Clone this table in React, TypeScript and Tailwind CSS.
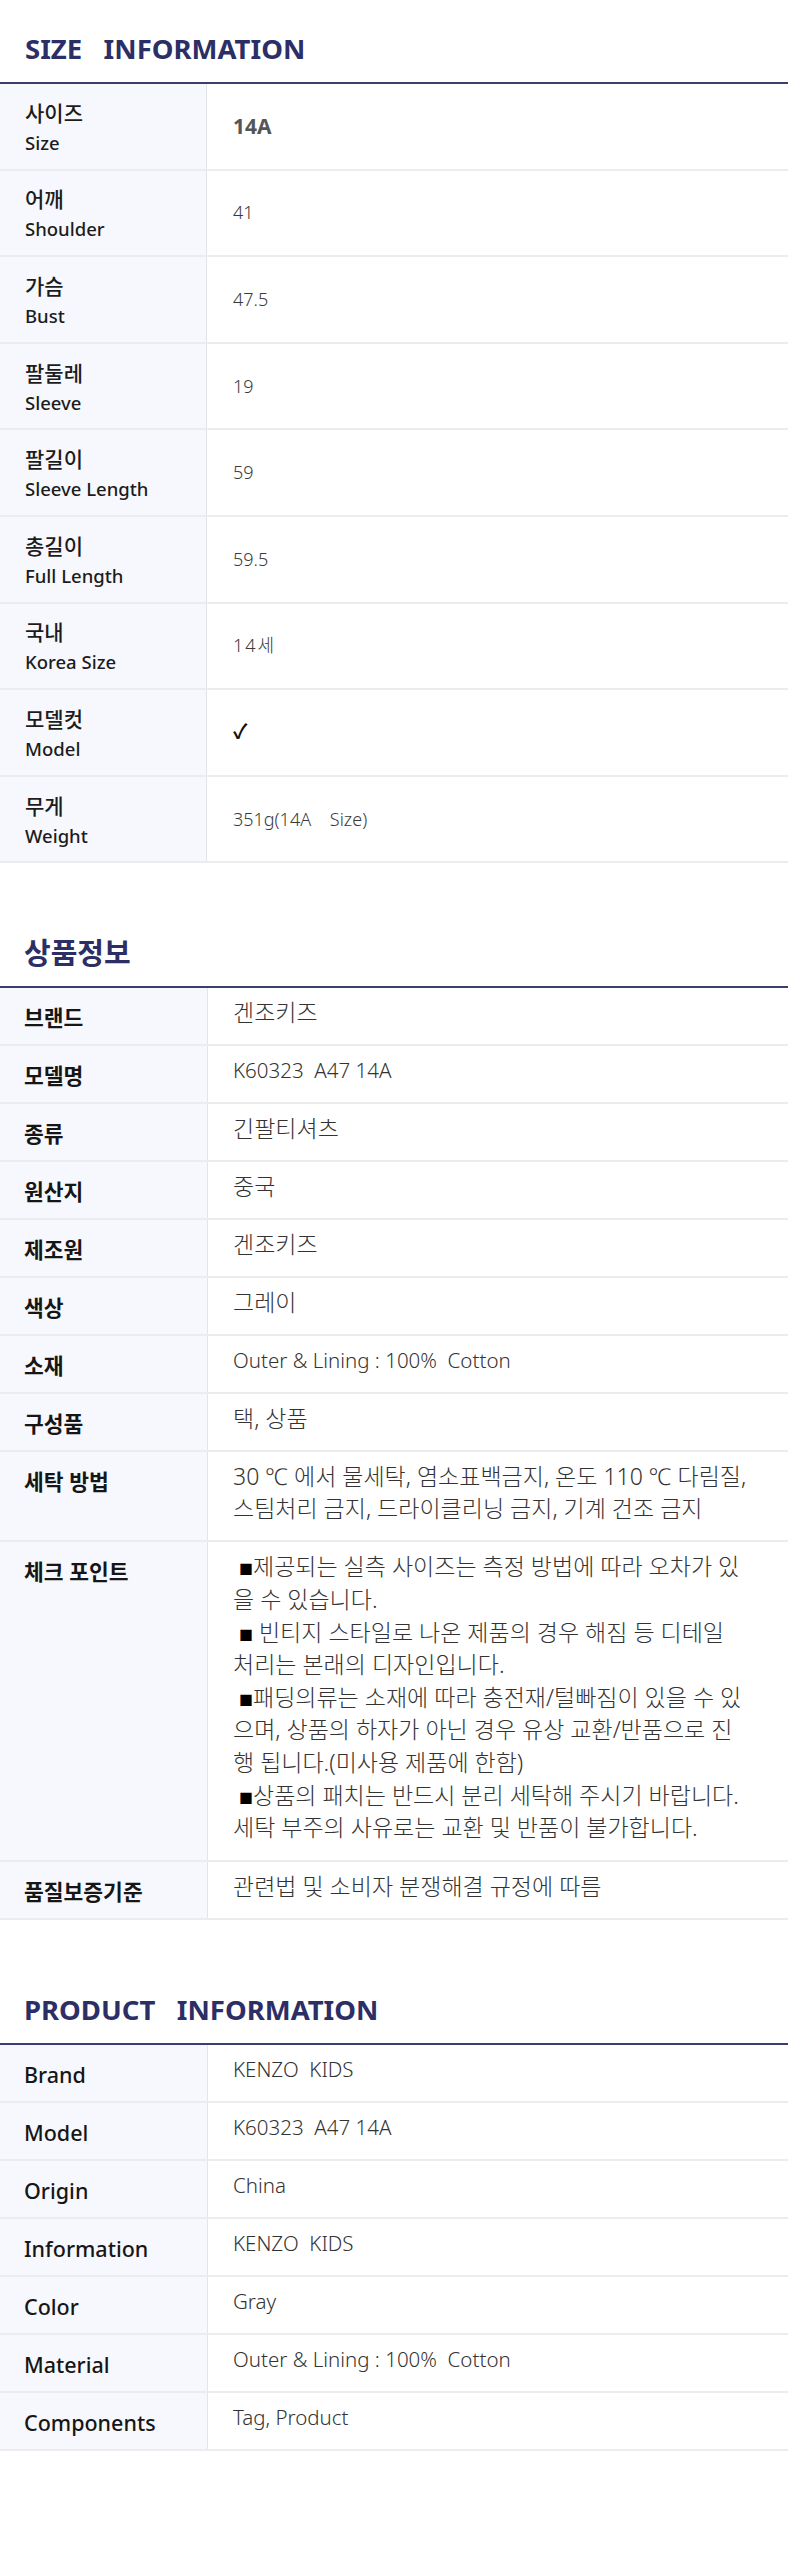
import React from "react";

const sizeRows: [string, string, string][] = [
  ["사이즈", "Size", "14A"],
  ["어깨", "Shoulder", "41"],
  ["가슴", "Bust", "47.5"],
  ["팔둘레", "Sleeve", "19"],
  ["팔길이", "Sleeve Length", "59"],
  ["총길이", "Full Length", "59.5"],
  ["국내", "Korea Size", "14세"],
  ["모델컷", "Model", "✓"],
  ["무게", "Weight", "351g(14A    Size)"],
];

type InfoRow = { label: string; lines: string[]; tight?: boolean; latin?: boolean };

const infoRows: InfoRow[] = [
  { label: "브랜드", lines: ["겐조키즈"] },
  { label: "모델명", lines: ["K60323  A47 14A"], latin: true },
  { label: "종류", lines: ["긴팔티셔츠"] },
  { label: "원산지", lines: ["중국"] },
  { label: "제조원", lines: ["겐조키즈"] },
  { label: "색상", lines: ["그레이"] },
  { label: "소재", lines: ["Outer & Lining : 100%  Cotton"], latin: true },
  { label: "구성품", lines: ["택, 상품"] },
  {
    label: "세탁 방법",
    lines: [
      "30 ℃ 에서 물세탁, 염소표백금지, 온도 110 ℃ 다림질,",
      "스팀처리 금지, 드라이클리닝 금지, 기계 건조 금지",
    ],
  },
  {
    label: "체크 포인트",
    tight: true,
    lines: [
      " ■제공되는 실측 사이즈는 측정 방법에 따라 오차가 있",
      "을 수 있습니다.",
      " ■ 빈티지 스타일로 나온 제품의 경우 해짐 등 디테일",
      "처리는 본래의 디자인입니다.",
      " ■패딩의류는 소재에 따라 충전재/털빠짐이 있을 수 있",
      "으며, 상품의 하자가 아닌 경우 유상 교환/반품으로 진",
      "행 됩니다.(미사용 제품에 한함)",
      " ■상품의 패치는 반드시 분리 세탁해 주시기 바랍니다.",
      "세탁 부주의 사유로는 교환 및 반품이 불가합니다.",
    ],
  },
  { label: "품질보증기준", lines: ["관련법 및 소비자 분쟁해결 규정에 따름"] },
];

const productRows: InfoRow[] = [
  { label: "Brand", lines: ["KENZO  KIDS"], latin: true },
  { label: "Model", lines: ["K60323  A47 14A"], latin: true },
  { label: "Origin", lines: ["China"], latin: true },
  { label: "Information", lines: ["KENZO  KIDS"], latin: true },
  { label: "Color", lines: ["Gray"], latin: true },
  { label: "Material", lines: ["Outer & Lining : 100%  Cotton"], latin: true },
  { label: "Components", lines: ["Tag, Product"], latin: true },
];

// the black square bullet is drawn small in the reference
const Line = ({ text }: { text: string }) => {
  const parts = text.split("■");
  if (parts.length === 1) return <div className="whitespace-pre">{text}</div>;
  return (
    <div className="whitespace-pre">
      {parts[0]}
      <span className="text-[14px] leading-none align-[1px] text-black">■</span>
      {parts[1]}
    </div>
  );
};

const InfoTable = ({ rows, labelClass }: { rows: InfoRow[]; labelClass: string }) => (
  <div className="border-t-2 border-[#3c3e6d]">
    {rows.map((row) => (
      <div
        key={row.label}
        className="grid grid-cols-[208px_1fr] border-b-2 border-[#ececee]"
      >
        <div
          className={`bg-[#f7f8fd] border-r border-[#e4e5ea] pl-[24px] pt-[14px] leading-[32px] text-[#161616] ${labelClass}`}
        >
          {row.label}
        </div>
        <div
          className={`pl-[25px] pt-[8px] pb-[16px] font-light text-[#333] ${
            row.latin ? "text-[20.5px]" : "text-[23px]"
          } ${row.tight ? "leading-[32.6px]" : "leading-[32px]"}`}
        >
          {row.lines.map((line, i) => (
            <Line key={i} text={line} />
          ))}
        </div>
      </div>
    ))}
  </div>
);

const Heading = ({ children, size }: { children: React.ReactNode; size: string }) => (
  <div
    className={`pt-[75px] pb-[18px] pl-[24px] font-bold leading-[30px] text-[#2c2e66] whitespace-pre ${size}`}
  >
    {children}
  </div>
);

export default function App() {
  return (
    <div className="w-[788px] bg-white pb-[105px] font-['Noto_Sans','Noto_Sans_CJK_KR',sans-serif]">
      {/* size information */}
      <div className="pt-[34px] pb-[18px] pl-[25px] text-[27.5px] font-bold leading-[30px] text-[#2c2e66] whitespace-pre">
        SIZE   INFORMATION
      </div>
      <div className="border-t-2 border-[#3c3e6d]">
        {sizeRows.map(([ko, en, value], i) => (
          <div
            key={en}
            className="grid h-[86.6px] grid-cols-[207px_1fr] border-b-2 border-[#ececee]"
          >
            <div className="flex flex-col justify-center bg-[#f7f8fd] border-r border-[#e2e3e8] pl-[25px] pt-[3px] font-medium text-[#1c1c1c]">
              <span className="text-[21px] leading-[30px]">{ko}</span>
              <span className="text-[18.5px] leading-[30px]">{en}</span>
            </div>
            <div
              className={`flex items-center pl-[26px] whitespace-pre ${
                i === 0
                  ? "text-[21px] font-bold text-[#555]"
                  : i === 7
                  ? "text-[20px] font-bold text-[#111]"
                  : "text-[18px] font-light text-[#3a3a3a]"
              } ${i === 6 ? "tracking-[2px]" : ""}`}
            >
              {value}
            </div>
          </div>
        ))}
      </div>

      {/* 상품정보 */}
      <Heading size="text-[29px]">상품정보</Heading>
      <InfoTable rows={infoRows} labelClass="text-[21.5px] font-bold" />

      {/* product information */}
      <Heading size="text-[27.5px]">PRODUCT   INFORMATION</Heading>
      <InfoTable rows={productRows} labelClass="text-[21.5px] font-medium" />
    </div>
  );
}
